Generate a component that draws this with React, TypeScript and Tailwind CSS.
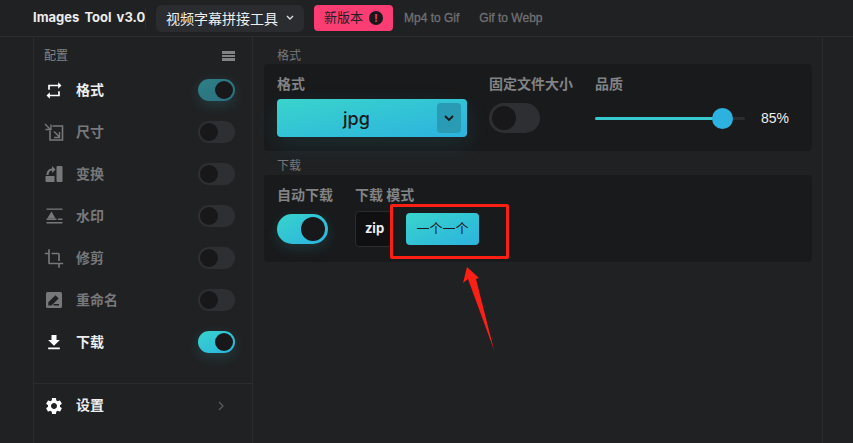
import { ReactNode } from "react";
import { MdRepeat, MdCrop, MdFileDownload, MdSettings } from "react-icons/md";

const FONT = "font-['Inter','Noto_Sans_CJK_SC',sans-serif]";

function SizeIcon() {
  return (
    <svg width="20" height="18" viewBox="0 0 20 18" fill="none" stroke="currentColor" strokeWidth="1.600">
      <path d="M8.500 3h10v14H6V7.500" />
      <path d="M1 1l6 6M1.500 6.500H7V1.500" strokeWidth="1.400" />
      <path d="M10 8.500l5.500 5.500M10 14.500h5.500V9" strokeWidth="1.400" />
    </svg>
  );
}

function TransformIcon() {
  return (
    <svg width="18" height="18" viewBox="0 0 18 18" fill="currentColor">
      <rect x="11.500" y="1" width="6" height="16" rx="1" />
      <path d="M0.500 11h9v6H1.500a1 1 0 0 1-1-1z" />
      <path d="M1.500 10C1.500 6.500 3.500 3.500 7 3.500V1l3.500 3.500L7 8V5.500C5 5.500 3.500 7.500 3.500 10z" />
    </svg>
  );
}

function WatermarkIcon() {
  return (
    <svg width="17" height="17" viewBox="0 0 17 17" fill="currentColor">
      <rect x="0.500" y="0.500" width="16" height="1.300" />
      <path d="M5.500 3.500l4 7H1.200z" />
      <rect x="0.500" y="10.500" width="10" height="1.500" />
      <rect x="12" y="10.500" width="4.500" height="1.500" />
      <rect x="0.500" y="14" width="16" height="1.500" />
    </svg>
  );
}

function RenameIcon() {
  return (
    <svg width="16" height="16" viewBox="0 0 16 16">
      <rect width="16" height="16" rx="1.500" fill="currentColor" />
      <path d="M3 12.800v-2.200L9.500 4.200l2.200 2.200-6.500 6.400zM7.500 12.800H13" stroke="#202123" strokeWidth="1.400" fill="#202123" />
    </svg>
  );
}

function Toggle({ on, dim, large }: { on?: boolean; dim?: boolean; large?: boolean }) {
  const size = large ? "h-[30px] w-[51px] p-[3px]" : "h-[22px] w-[37px] p-[2px]";
  const knob = large ? "h-6 w-6" : "h-[18px] w-[18px]";
  if (!on) {
    return (
      <div className={`flex items-center rounded-full bg-[#2e2f32] ${size}`}>
        <div className={`rounded-full bg-[#18181a] ${knob}`} />
      </div>
    );
  }
  return (
    <div
      className={`flex items-center justify-end rounded-full shadow-[0_4px_14px_rgba(56,189,200,0.18)] ${size} ${
        dim ? "bg-gradient-to-br from-[#2e7f85] to-[#2c6f80]" : "bg-gradient-to-br from-[#38d4cc] to-[#2db2df]"
      }`}
    >
      <div className={`rounded-full bg-[#18181a] ${knob}`} />
    </div>
  );
}

function NavRow({ icon, label, on, dim, active }: { icon: ReactNode; label: string; on?: boolean; dim?: boolean; active?: boolean }) {
  return (
    <div className="flex h-[42px] items-center pl-[10px] pr-[17px]">
      <div className={`flex w-[20px] items-center justify-center ${active ? "text-white" : "text-[#77787a]"}`}>{icon}</div>
      <div className={`mb-[2px] ml-[12px] flex-1 text-[14px] font-bold ${active ? "text-[#eeeeee]" : "text-[#77787a]"}`}>{label}</div>
      <Toggle on={on} dim={dim} />
    </div>
  );
}

function Label({ children, className = "" }: { children: ReactNode; className?: string }) {
  return <div className={`text-[14px] font-bold leading-[20px] text-[#828385] ${className}`}>{children}</div>;
}

export default function App() {
  return (
    <div className={`relative h-[443px] w-[853px] overflow-hidden bg-[#202123] ${FONT}`}>
      <header className="flex h-[37px] items-center border-b border-[#2b2c2f] pl-[33px]">
        <div className="w-[112px] whitespace-nowrap text-[13px] font-bold text-[#ececec] [word-spacing:2px]">Images Tool v3.0</div>
        <div className="mr-[10px] h-[20px] w-px bg-[#2b2c2f]" />
        <div className="flex h-[27px] w-[148px] items-center justify-center gap-[8px] rounded-[6px] bg-[#2b2c2f] text-[14px] text-[#eeeeee]">
          视频字幕拼接工具
          <svg width="8" height="6" viewBox="0 0 8 6" fill="none" stroke="#dddddd" strokeWidth="1.400">
            <path d="M1 1l3 3 3-3" />
          </svg>
        </div>
        <div className="ml-[10px] flex h-[26px] w-[79px] items-center justify-center gap-[6px] rounded-[4px] bg-[#fb3d74] text-[13px] text-[#1f1f22]">
          新版本
          <div className="flex h-[14px] w-[14px] items-center justify-center rounded-full bg-[#18181a] text-[10px] font-bold leading-none text-[#fb3d74]">!</div>
        </div>
        <div className="ml-[11px] font-['Liberation_Sans',sans-serif] text-[12px] text-[#707173] [-webkit-text-stroke:0.3px_#707173]">Mp4 to Gif</div>
        <div className="ml-[20px] font-['Liberation_Sans',sans-serif] text-[12px] text-[#707173] [-webkit-text-stroke:0.3px_#707173]">Gif to Webp</div>
      </header>

      <div className="flex h-[406px] pl-[33px]">
        <aside className="flex w-[220px] flex-col border-x border-[#2b2c2f]">
          <div className="flex h-[32px] items-center justify-between pl-[10px] pr-[17px] pt-[6px]">
            <span className="text-[12px] text-[#828385]">配置</span>
            <div className="flex flex-col gap-[1px]">
              <div className="h-[2.500px] w-[13px] bg-[#828385]" />
              <div className="h-[2.500px] w-[13px] bg-[#828385]" />
              <div className="h-[2.500px] w-[13px] bg-[#828385]" />
            </div>
          </div>
          <NavRow icon={<MdRepeat size={21} />} label="格式" on dim active />
          <NavRow icon={<SizeIcon />} label="尺寸" />
          <NavRow icon={<TransformIcon />} label="变换" />
          <NavRow icon={<WatermarkIcon />} label="水印" />
          <NavRow icon={<MdCrop size={21} />} label="修剪" />
          <NavRow icon={<RenameIcon />} label="重命名" />
          <NavRow icon={<MdFileDownload size={21} />} label="下载" on active />
          <div className="mt-[20px] flex h-[44px] items-center border-t border-[#2b2c2f] pl-[10px] pr-[28px]">
            <div className="flex w-[20px] justify-center text-white">
              <MdSettings size={22} />
            </div>
            <div className="mb-[2px] ml-[12px] flex-1 text-[14px] font-bold text-[#eeeeee]">设置</div>
            <svg width="6" height="10" viewBox="0 0 6 10" fill="none" stroke="#5c5d60" strokeWidth="1.200">
              <path d="M1 1l4 4-4 4" />
            </svg>
          </div>
        </aside>

        <main className="w-[570px] border-r border-[#2b2c2f] pl-[11px] pr-[10px]">
          <div className="h-[27px] pl-[13px] pt-[11px] text-[12px] leading-[16px] text-[#77787a]">格式</div>
          <section className="flex h-[87px] rounded-[4px] bg-[#191a1c] pl-[13px] pt-[10px]">
            <div className="w-[212px]">
              <Label>格式</Label>
              <div className="relative mt-[5px] flex h-[38px] w-[190px] items-center rounded-[4px] bg-gradient-to-br from-[#3ad4cb] to-[#2db2df] pl-[66px] text-[18px] font-medium text-[#18181a] shadow-[0_8px_24px_rgba(56,189,200,0.12)]">
                jpg
                <div className="absolute right-[6px] top-[4px] flex h-[30px] w-[24px] items-center justify-center rounded-[4px] bg-[#2a9bb4]">
                  <svg width="10" height="7" viewBox="0 0 10 7" fill="none" stroke="#18181a" strokeWidth="1.800">
                    <path d="M1 1l4 4 4-4" />
                  </svg>
                </div>
              </div>
            </div>
            <div className="w-[106px]">
              <Label>固定文件大小</Label>
              <div className="mt-[9px]">
                <Toggle large />
              </div>
            </div>
            <div>
              <Label>品质</Label>
              <div className="mt-[9px] flex h-[30px] items-center">
                <div className="relative h-[3px] w-[150px] rounded-full bg-[#2b2c2f]">
                  <div className="h-full w-[127px] rounded-full bg-[#38c9cf]" />
                  <div className="absolute left-[117px] top-[-9px] h-[21px] w-[21px] rounded-full bg-[#2db2df]" />
                </div>
                <div className="ml-[16px] font-['Liberation_Sans',sans-serif] text-[14px] text-[#eeeeee]">85%</div>
              </div>
            </div>
          </section>

          <div className="h-[24px] pl-[13px] pt-[7px] text-[12px] leading-[16px] text-[#77787a]">下载</div>
          <section className="flex h-[87px] rounded-[4px] bg-[#191a1c] pl-[13px] pt-[10px]">
            <div className="w-[78px]">
              <Label>自动下载</Label>
              <div className="mt-[9px]">
                <Toggle on large />
              </div>
            </div>
            <div>
              <Label>下载 模式</Label>
              <div className="mt-[6px] flex items-center">
                <div className="flex h-[36px] w-[37px] items-center justify-center rounded-[4px] border border-[#2b2c2f] bg-[#101012] pl-[2px] text-[13px] font-bold text-[#eeeeee]">zip</div>
                <div className="ml-[14px] flex h-[32px] w-[73px] items-center justify-center rounded-[4px] bg-gradient-to-br from-[#3ad4cb] to-[#2db2df] text-[13px] text-[#18181a]">一个一个</div>
              </div>
            </div>
          </section>
        </main>
      </div>

      {/* annotation drawn over the screenshot */}
      <div className="absolute left-[390px] top-[204px] h-[55px] w-[119px] rounded-[2px] border-[3px] border-[#fb1f14]" />
      <svg className="absolute left-[460px] top-[265px]" width="36" height="88" viewBox="0 0 36 88" fill="#fb1f14">
        <path d="M7 2L19 13 16 14 34 85 8 14 3 18z" />
      </svg>
    </div>
  );
}
